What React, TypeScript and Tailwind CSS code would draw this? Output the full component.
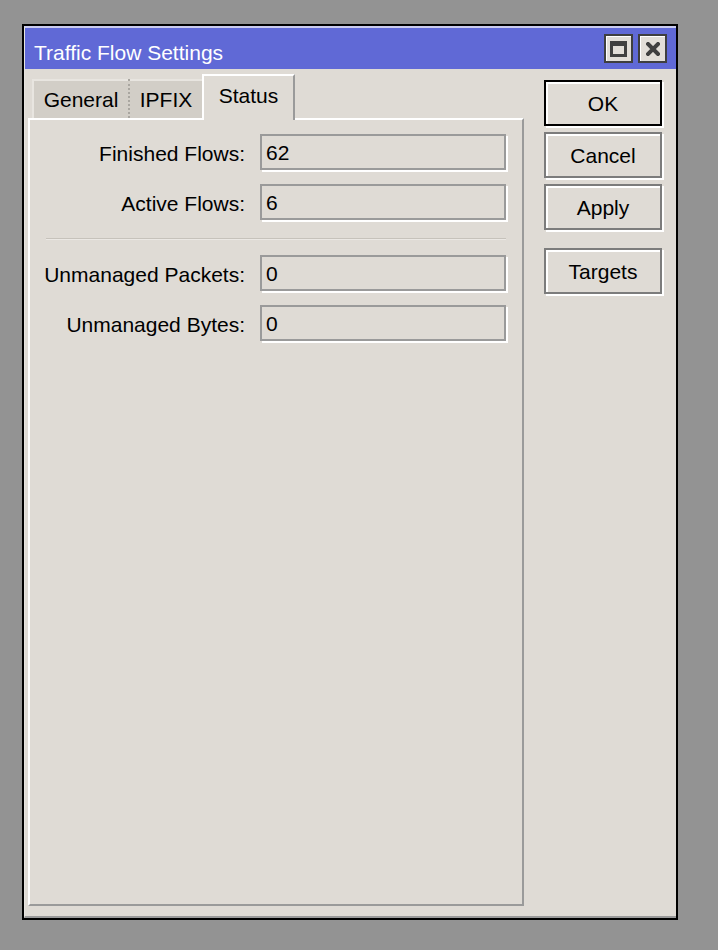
import React from "react";

const font = { fontFamily: '"Liberation Sans", Arial, sans-serif' };

function Field({ label, value }: { label: string; value: string }) {
  return (
    <div className="flex items-start h-[36px]">
      <div className="w-[215px] text-right pt-[8px] leading-[24px] text-black whitespace-nowrap">{label}</div>
      <div className="ml-[15px] w-[246px] h-[36px] border-2 border-[#9a9a9a] shadow-[2px_2px_0_#ffffff] pl-[4px] pt-[5px] leading-[24px] text-black">
        {value}
      </div>
    </div>
  );
}

function Btn({ label, def, className = "" }: { label: string; def?: boolean; className?: string }) {
  return (
    <div
      className={
        "h-[46px] w-[118px] flex items-center justify-center leading-[24px] text-black bg-[#dfdbd5] border-2 shadow-[inset_2px_2px_0_#ffffff,2px_2px_0_#ffffff] " +
        (def ? "border-black " : "border-[#7c7c7c] ") +
        className
      }
    >
      <span className="pt-[1px]">{label}</span>
    </div>
  );
}

export default function App() {
  return (
    <div className="min-h-[950px] bg-[#939393] pt-[24px] pl-[22px] text-[21px]" style={font}>
      <div className="w-[656px] h-[896px] border-2 border-black bg-[#dfdbd5] flex flex-col">
        <div className="flex-1 flex flex-col border-l border-t-2 border-b-2 border-l-[#e6e4e0] border-t-[#c9cbef] border-b-[#9a9a9a]">
          {/* title bar */}
          <div className="h-[41px] bg-[#6069d6] flex items-start justify-between">
            <div className="pl-[9px] pt-[13px] leading-[24px] text-white whitespace-nowrap">Traffic Flow Settings</div>
            <div className="flex gap-[5px] pt-[6px] pr-[9px]">
              <div className="w-[29px] h-[29px] border-2 border-[#3f3f3f] bg-[#e2ded8] shadow-[inset_1px_1px_0_#ffffff] pl-[4px] pt-[5px]">
                <div className="w-[17px] h-[16px] border-[3px] border-t-[5px] border-[#404040]" />
              </div>
              <div className="w-[29px] h-[29px] border-2 border-[#3f3f3f] bg-[#e2ded8] shadow-[inset_1px_1px_0_#ffffff] flex items-center justify-center">
                <svg width="14" height="14" viewBox="0 0 14 14">
                  <path d="M2 2 L12 12 M12 2 L2 12" stroke="#404040" strokeWidth="4" strokeLinecap="square" fill="none" />
                </svg>
              </div>
            </div>
          </div>
          {/* body */}
          <div className="flex-1 flex pl-[3px] pt-[5px] pb-[10px]">
            <div className="w-[496px] flex flex-col">
              <div className="h-[44px] flex items-end pl-[4px]">
                <div className="w-[96px] h-[39px] bg-[#d2cec7] border-t-2 border-l-2 border-[#e8e5e0] flex justify-center pt-[7px] leading-[24px] text-black">
                  General
                </div>
                <div className="w-[2px] h-[39px] bg-[#d2cec7] border-r-2 border-[#a9a6a0] [border-right-style:dotted]" />
                <div className="w-[72px] h-[39px] bg-[#d2cec7] border-t-2 border-t-[#e8e5e0] flex justify-center pt-[7px] leading-[24px] text-black">
                  IPFIX
                </div>
                <div className="relative z-10 w-[93px] h-[46px] -mb-[2px] bg-[#dfdbd5] border-t-2 border-l-2 border-r-2 border-t-white border-l-white border-r-[#9a9a9a] flex justify-center pt-[8px] leading-[24px] text-black">
                  Status
                </div>
              </div>
              <div className="flex-1 border-2 border-t-white border-l-white border-r-[#9a9a9a] border-b-[#9a9a9a] pt-[14px] flex flex-col">
                <Field label="Finished Flows:" value="62" />
                <div className="mt-[14px]">
                  <Field label="Active Flows:" value="6" />
                </div>
                <div className="mt-[18px] ml-[16px] w-[460px] h-[2px] border-t border-t-[#c6c2bb] border-b border-b-[#ebe8e4]" />
                <div className="mt-[15px]">
                  <Field label="Unmanaged Packets:" value="0" />
                </div>
                <div className="mt-[14px]">
                  <Field label="Unmanaged Bytes:" value="0" />
                </div>
              </div>
            </div>
            <div className="ml-[20px] pt-[6px] flex flex-col gap-[6px]">
              <Btn label="OK" def />
              <Btn label="Cancel" />
              <Btn label="Apply" />
              <Btn label="Targets" className="mt-[12px]" />
            </div>
          </div>
        </div>
      </div>
    </div>
  );
}
